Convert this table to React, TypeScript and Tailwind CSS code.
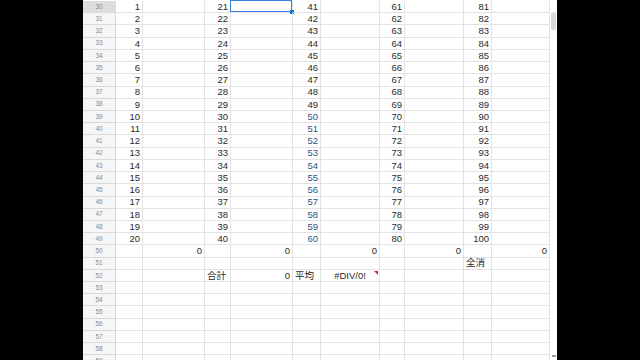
import React from "react";

type Align = "left" | "right" | "center";
type Cell = { v?: string; align?: Align; tone?: string; comment?: boolean; selected?: boolean };

// column widths: row header, then A..J
const COLS = [27, 62, 26, 62, 28, 59, 25, 59, 28, 58];
const ROW_H = "h-[12.22px]";

function buildRow(r: number): Cell[] {
  const cells: Cell[] = COLS.map(() => ({}));
  if (r >= 30 && r <= 49) {
    const i = r - 29;
    cells[0] = { v: String(i), align: "right" };
    cells[2] = { v: String(i + 20), align: "right" };
    const e = i + 40;
    cells[4] = { v: String(e), align: "right", tone: e >= 50 ? "text-[#2f5680]" : undefined };
    cells[6] = { v: String(i + 60), align: "right" };
    cells[8] = { v: String(i + 80), align: "right" };
  }
  if (r === 30) cells[3] = { selected: true };
  if (r === 50) {
    [1, 3, 5, 7, 9].forEach((c) => (cells[c] = { v: "0", align: "right" }));
  }
  if (r === 51) cells[8] = { v: "全消", align: "left" };
  if (r === 52) {
    cells[2] = { v: "合計", align: "left" };
    cells[3] = { v: "0", align: "right" };
    cells[4] = { v: "平均", align: "left" };
    cells[5] = { v: "#DIV/0!", align: "center", comment: true };
  }
  return cells;
}

const ROWS = Array.from({ length: 30 }, (_, k) => 30 + k);

export default function App() {
  return (
    <div
      className="flex h-[360px] w-[640px] overflow-hidden bg-black"
      style={{ fontFamily: '"Liberation Sans", Arial, "Noto Sans CJK JP", sans-serif' }}
    >
      <div className="w-[83px] shrink-0 bg-black" />
      <div className="flex w-[474px] shrink-0 bg-white">
        <div className="w-[467px] shrink-0 overflow-hidden pt-[1px]">
          {ROWS.map((r) => (
            <div key={r} className={`flex ${ROW_H}`}>
              <div
                className={`box-border flex w-[33px] shrink-0 items-center justify-center border-r border-b border-[#d9d9d9] text-[6.5px] text-[#8a8a8a] ${
                  r === 30 ? "bg-[#dedede]" : "bg-[#f6f6f6]"
                }`}
              >
                {r}
              </div>
              {buildRow(r).map((c, ci) => (
                <div
                  key={ci}
                  className={`relative box-border flex shrink-0 items-center border-r border-b border-[#e3e3e3] px-[2px] text-[9.5px] leading-none ${
                    c.tone ?? "text-[#2a2a2a]"
                  } ${
                    c.align === "right" ? "justify-end" : c.align === "center" ? "justify-center" : "justify-start"
                  }`}
                  style={{ width: COLS[ci] }}
                >
                  {c.v}
                  {c.comment && (
                    <span className="absolute right-[1px] top-[1px] h-0 w-0 border-l-[4px] border-t-[4px] border-l-transparent border-t-[#e0201b]" />
                  )}
                  {c.selected && (
                    <>
                      <span className="pointer-events-none absolute -left-[1px] -top-[1px] bottom-0 right-0 border-[1.5px] border-[#3d7fe0]" />
                      <span className="absolute -bottom-[2px] -right-[2px] h-[4px] w-[4px] bg-[#1a6fe0]" />
                    </>
                  )}
                </div>
              ))}
            </div>
          ))}
        </div>
        <div className="relative w-[7px] shrink-0 bg-white">
          <div className="absolute left-[1px] top-[12px] h-[18px] w-[5px] rounded-[3px] bg-[#d8d8d8]" />
          <div className="absolute bottom-[3px] left-[2px] h-[2px] w-[4px] bg-[#9a9a9a]" />
        </div>
      </div>
      <div className="flex-1 bg-black" />
    </div>
  );
}
